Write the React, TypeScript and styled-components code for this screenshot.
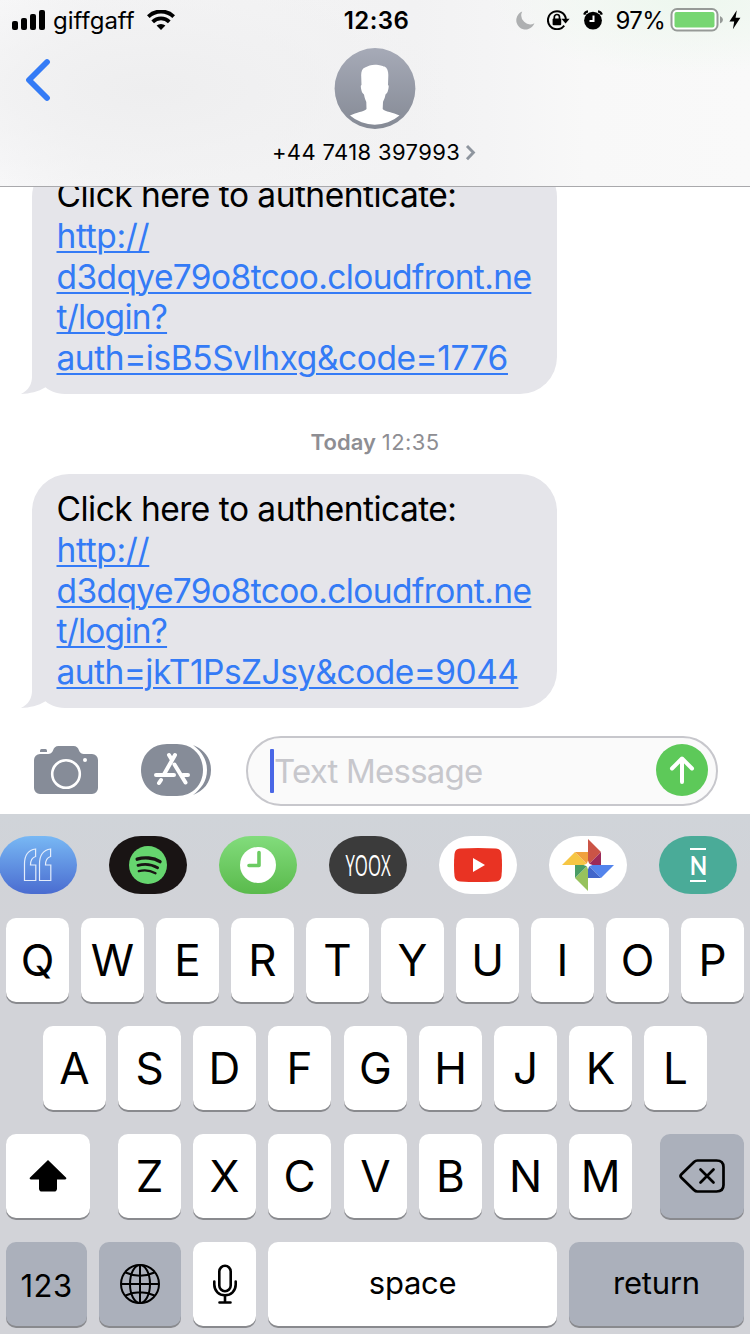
import React from "react";
import styled, { createGlobalStyle } from "styled-components";

const GlobalStyle = createGlobalStyle`
  * { box-sizing: border-box; }
  html, body { margin: 0; padding: 0; }
  body { background: #fff; font-family: Inter, "Liberation Sans", sans-serif; color: #000; }
  svg { display: block; flex: none; }
`;

const Screen = styled.div`
  width: 750px;
  height: 1334px;
  display: flex;
  flex-direction: column;
  overflow: hidden;
  background: #fff;
`;

const Header = styled.header`
  flex: none;
  height: 187px;
  border-bottom: 1px solid #a9a9ac;
  background:
    radial-gradient(ellipse 200px 75px at 690px 0px, #edf7ee 0%, rgba(240, 248, 241, 0) 100%),
    radial-gradient(ellipse 300px 120px at 150px 90px, #eeeeef 0%, rgba(240, 240, 241, 0.8) 45%, rgba(244, 244, 245, 0) 100%),
    linear-gradient(90deg, #f8f8f9 0%, #f4f4f5 12%, #f2f2f3 55%, #f4f4f5 65%, #f8f8f8 78%, #f9f9f9 100%);
`;

const StatusBar = styled.div`
  display: grid;
  grid-template-columns: 1fr auto 1fr;
  align-items: center;
  height: 40px;
  padding: 0 9px 0 12px;
`;

const StatusSide = styled.div<{ $end?: boolean }>`
  display: flex;
  align-items: center;
  justify-content: ${(p) => (p.$end ? "flex-end" : "flex-start")};
`;

const StatusIcon = styled.div<{ $mr: number }>`
  margin-right: ${(p) => p.$mr}px;
`;

const Label = styled.span<{
  $size: number;
  $weight?: number;
  $track?: number;
  $color?: string;
  $ml?: number;
  $mr?: number;
  $pt?: number;
}>`
  display: block;
  white-space: pre;
  font-size: ${(p) => p.$size}px;
  font-weight: ${(p) => p.$weight ?? 400};
  letter-spacing: ${(p) => p.$track ?? 0}px;
  color: ${(p) => p.$color ?? "#000"};
  margin-left: ${(p) => p.$ml ?? 0}px;
  margin-right: ${(p) => p.$mr ?? 0}px;
  padding-top: ${(p) => p.$pt ?? 0}px;
`;

const NavBar = styled.div`
  display: grid;
  grid-template-columns: 80px 1fr 80px;
  height: 146px;
`;

const BackButton = styled.div`
  padding: 18px 0 0 25px;
`;

const Contact = styled.div`
  display: flex;
  flex-direction: column;
  align-items: center;
  padding-top: 8px;
`;

const ContactLine = styled.div`
  display: flex;
  align-items: center;
  height: 28px;
  margin-top: 8px;
  gap: 5px;
`;

const Thread = styled.main`
  flex: none;
  height: 521px;
  padding-left: 32px;
  display: flex;
  flex-direction: column;
  justify-content: flex-end;
  align-items: flex-start;
  overflow: hidden;
`;

const Bubble = styled.div`
  position: relative;
  isolation: isolate;
  flex: none;
  width: 525px;
  height: 234px;
  padding: 15px 24px 15px 24.5px;
  border-radius: 37px;
  background: #e5e5ea;
`;

const Tail = styled.svg`
  position: absolute;
  z-index: -1;
  left: -11px;
  bottom: 0;
`;

const Line = styled.div<{ $track: number; $link?: boolean }>`
  height: 40.75px;
  line-height: 40.75px;
  font-size: 33.5px;
  white-space: pre;
  letter-spacing: ${(p) => p.$track}px;
  color: ${(p) => (p.$link ? "#347bf6" : "#000")};
  text-decoration: ${(p) => (p.$link ? "underline" : "none")};
  text-decoration-thickness: 2px;
  text-underline-offset: 3px;
`;

const Stamp = styled.div`
  flex: none;
  height: 80px;
  width: 686px;
  padding-top: 15px;
  display: flex;
  justify-content: center;
  align-items: center;
`;

const Composer = styled.div`
  flex: none;
  display: flex;
  align-items: flex-start;
  height: 106px;
  padding: 28px 32px 0 34px;
`;

const ComposerIcon = styled.div<{ $top: number; $width: number }>`
  flex: none;
  width: ${(p) => p.$width}px;
  padding-top: ${(p) => p.$top}px;
`;

const Field = styled.div`
  flex: none;
  display: flex;
  align-items: center;
  width: 472px;
  height: 70px;
  padding: 0 8px 0 22px;
  border: 2px solid #c7c7cc;
  border-radius: 35px;
  background: #fafafa;
`;

const Caret = styled.div`
  width: 4px;
  height: 44px;
  border-radius: 1px;
  background: #4a67e6;
`;

const SendButton = styled.div`
  margin-left: auto;
  padding-bottom: 2px;
`;

const Keyboard = styled.div`
  flex: none;
  height: 520px;
  padding-top: 21px;
  background: linear-gradient(180deg, #d0d4d9 0, #d1d3d8 60px, #d2d3d8 110px, #d2d3d8 100%);
`;

const AppStrip = styled.div`
  display: flex;
  gap: 32px;
  height: 83px;
  margin-left: -1px;
  padding-top: 1px;
`;

const AppPill = styled.div<{ $bg: string }>`
  flex: none;
  display: flex;
  align-items: center;
  justify-content: center;
  width: 78px;
  height: 58px;
  border-radius: 41% / 50%;
  background: ${(p) => p.$bg};
  overflow: hidden;
`;

const AppWord = styled.span`
  font-family: "Open Sans", sans-serif;
  font-size: 29px;
  font-weight: 500;
  line-height: 40px;
  color: #fff;
  transform: scaleX(0.58);
`;

const Rule = styled.div`
  width: 16px;
  height: 2.5px;
  background: #fff;
`;

const NStack = styled.div`
  display: flex;
  flex-direction: column;
  align-items: center;
`;

const NLetter = styled.span`
  font-family: Lato, sans-serif;
  font-size: 27px;
  font-weight: 700;
  line-height: 29.5px;
  color: #fff;
  transform: scaleX(0.84);
`;

const KeyRow = styled.div`
  display: flex;
  justify-content: center;
  height: 84px;
  margin-bottom: 24px;
`;

const KeyGroup = styled.div<{ $mr?: number; $ml?: number }>`
  display: flex;
  gap: 12px;
  margin-left: ${(p) => p.$ml ?? 0}px;
  margin-right: ${(p) => p.$mr ?? 0}px;
`;

const Key = styled.div<{ $w?: number; $dark?: boolean; $size?: number; $track?: number; $pt?: number; $pb?: number }>`
  flex: none;
  display: flex;
  align-items: center;
  justify-content: center;
  width: ${(p) => p.$w ?? 63}px;
  height: 84px;
  padding-top: ${(p) => p.$pt ?? 0}px;
  padding-bottom: ${(p) => p.$pb ?? 0}px;
  border-radius: 10px;
  background: ${(p) => (p.$dark ? "#abb0bb" : "#fff")};
  box-shadow: 0 2px 0 #898a8e;
  font-size: ${(p) => p.$size ?? 44}px;
  letter-spacing: ${(p) => p.$track ?? 0}px;
  line-height: 1;
`;

const Signal = () => (
  <svg width="34" height="20" viewBox="0 0 34 20">
    <rect x="0" y="11" width="6" height="9" rx="2" />
    <rect x="9" y="8" width="6" height="12" rx="2" />
    <rect x="18" y="4" width="6" height="16" rx="2" />
    <rect x="27" y="0" width="6" height="20" rx="2" />
  </svg>
);

const Wifi = () => (
  <svg width="28" height="20" viewBox="0 0 28 20" fill="none" stroke="#000">
    <path d="M1.3 6.6 A18.3 18.3 0 0 1 26.7 6.6" strokeWidth="3.9" />
    <path d="M5.7 11.9 A11.6 11.6 0 0 1 22.3 11.9" strokeWidth="3.7" />
    <path d="M14 20 L9.6 15.6 A6.6 6.6 0 0 1 18.4 15.6 Z" fill="#000" stroke="none" />
  </svg>
);

const Moon = () => (
  <svg width="19" height="19" viewBox="0 0 19 19">
    <path d="M6.2 0.6 A9.3 9.3 0 1 0 18.4 12.2 A8.9 8.9 0 0 1 6.2 0.6Z" fill="#aeb0b1" />
  </svg>
);

const RotationLock = () => (
  <svg width="24" height="20" viewBox="0 0 24 20">
    <path d="M17.2 15.6 A9 9 0 1 1 18.9 9" fill="none" stroke="#000" strokeWidth="2" />
    <path d="M14.4 8.8 H22.6 L18.6 13.6Z" />
    <rect x="5.6" y="8.4" width="8.6" height="6.8" rx="1" />
    <path d="M7.3 9 V7.1 A2.6 2.6 0 0 1 12.5 7.1 V9" fill="none" stroke="#000" strokeWidth="1.7" />
  </svg>
);

const Alarm = () => (
  <svg width="20" height="20" viewBox="0 0 20 20">
    <circle cx="10" cy="10.6" r="8.9" />
    <path d="M1.2 4.6 A4.5 4.5 0 0 1 5 1.4 M18.8 4.6 A4.5 4.5 0 0 0 15 1.4" fill="none" stroke="#000" strokeWidth="2.2" />
    <path d="M10.5 5.4 V11 H6.5" fill="none" stroke="#fff" strokeWidth="2" />
  </svg>
);

const Battery = () => (
  <svg width="54" height="24" viewBox="0 0 54 24">
    <rect x="1.5" y="1" width="46" height="21.5" rx="5.5" fill="#fff" stroke="#969a97" strokeWidth="2" />
    <rect x="4.5" y="4" width="40" height="15.5" rx="2" fill="#77d672" />
    <path d="M50 8 Q53 9.5 53 11.8 Q53 14 50 15.6Z" fill="#969a97" />
  </svg>
);

const Bolt = () => (
  <svg width="12" height="20" viewBox="0 0 12 20">
    <path d="M7.8 0.3 L0.4 11.4 H5.2 L3.9 19.2 L11.4 7.8 H6.6Z" />
  </svg>
);

const Back = () => (
  <svg width="27" height="44" viewBox="0 0 27 44">
    <path d="M22 4 L4 22 L22 40" fill="none" stroke="#347bf6" strokeWidth="5.8" strokeLinecap="round" strokeLinejoin="round" />
  </svg>
);

const Avatar = () => (
  <svg width="83" height="82" viewBox="0 0 83 82">
    <defs>
      <linearGradient id="avatarFill" x1="0" y1="0" x2="0" y2="1">
        <stop offset="0" stopColor="#a6aab7" />
        <stop offset="1" stopColor="#858a95" />
      </linearGradient>
    </defs>
    <circle cx="41" cy="40.5" r="40.4" fill="url(#avatarFill)" />
    <path
      d="M41 16.7 C46 16.7 48 18 50.5 18.6 C53.5 20 54.5 24 54.3 28 L54 37 C55.3 37.5 54.5 40.5 54 42.5 C53.5 45 52.5 45.5 51.5 46.5 C51 50.5 49.6 52 49 54 L48.7 61 C51 63.6 59 64.5 65.5 67.5 A38 38 0 0 1 16 67.5 C22.5 64.5 30 63.6 32.5 61 L32.3 54 C31.6 52 30.6 50.5 30 46.5 C29 45.5 28 45 27.5 42.5 C27 40.5 26.2 37.5 27.5 37 L27.2 28 C27 24 28 20.5 31 19.5 C34 18 37 16.7 41 16.7Z"
      fill="#fff"
    />
  </svg>
);

const SmallChevron = () => (
  <svg width="13" height="17" viewBox="0 0 13 17">
    <path d="M2 2 L8.4 8.6 L2 15.2" fill="none" stroke="#8e959e" strokeWidth="2.9" />
  </svg>
);

const BubbleTail = () => (
  <Tail width="60" height="40" viewBox="0 0 60 40">
    <path d="M11 0 V23 C11 30 7.5 36.5 0 40 H60 V0Z" fill="#e5e5ea" />
    <path d="M0 40 C9 39.4 17 37.8 24.5 33.2 C30 38 37 40 48 40 Z" fill="#fff" />
  </Tail>
);

const Camera = () => (
  <svg width="64" height="48" viewBox="0 0 64 48">
    <path
      d="M6 8 H13 C17 8 18 6.5 19 4.5 C20 1.5 21.5 0 24.5 0 H39.5 C42.5 0 44 1.5 45 4.5 C46 6.5 47 8 51 8 H58 A6 6 0 0 1 64 14 V42 A6 6 0 0 1 58 48 H6 A6 6 0 0 1 0 42 V14 A6 6 0 0 1 6 8Z"
      fill="#868c98"
    />
    <path d="M6 6 V4.5 Q6 3 7.5 3 H11.5 Q13 3 13 4.5 V6Z" fill="#868c98" />
    <circle cx="32" cy="28" r="13.8" fill="none" stroke="#fff" strokeWidth="2.6" />
    <circle cx="51" cy="14" r="2" fill="#fff" />
  </svg>
);

const AppStore = () => (
  <svg width="71" height="52" viewBox="0 0 71 52">
    <path d="M52 1 C62 5 70 13 70 26 C70 39 62 47 52 51 C60 45 66 37 66 26 C66 15 60 7 52 1Z" fill="#868c98" />
    <path d="M26 0 H36 C52 0 62 12 62 26 C62 40 52 52 36 52 H26 C10 52 0 40 0 26 C0 12 10 0 26 0Z" fill="#868c98" />
    <g fill="none" stroke="#fff" strokeWidth="4" strokeLinecap="round">
      <path d="M15 31 H33 M42 31 H47 M34 11 L23.5 29.5 M28 11 L31 16 M33.5 20.5 L44.5 38.5 M20 36 L18 39" />
    </g>
  </svg>
);

const Send = () => (
  <svg width="52" height="52" viewBox="0 0 52 52">
    <circle cx="26" cy="26" r="26" fill="#5dc959" />
    <path d="M26 38 V15 M16 24.5 L26 14.5 L36 24.5" fill="none" stroke="#fff" strokeWidth="4" strokeLinecap="round" strokeLinejoin="round" />
  </svg>
);

const Quote = () => (
  <svg width="30" height="34" viewBox="0 0 30 34" fill="none" stroke="#e4edfb" strokeWidth="1.2">
    <path d="M12.6 1 C5 2 1.5 8 1.5 16 V32.5 H12.8 V17 H7.5 C7.5 12 9 9.5 12.6 8.5Z" />
    <path d="M27.6 1 C20 2 16.5 8 16.5 16 V32.5 H27.8 V17 H22.5 C22.5 12 24 9.5 27.6 8.5Z" />
  </svg>
);

const Spotify = () => (
  <svg width="38" height="38" viewBox="0 0 38 38">
    <circle cx="19" cy="19" r="19" fill="#66d56f" />
    <g fill="none" stroke="#191414" strokeLinecap="round">
      <path d="M8.2 13.2 C15 11 24.5 11.5 31 15.6" strokeWidth="3.4" />
      <path d="M9 19.4 C15 17.7 22.5 18.2 28.6 21.8" strokeWidth="2.8" />
      <path d="M9.8 25.2 C15 23.8 21 24.2 26.5 27.3" strokeWidth="2.3" />
    </g>
  </svg>
);

const Clock = () => (
  <svg width="36" height="36" viewBox="0 0 36 36">
    <circle cx="18" cy="18" r="18" fill="#fff" />
    <path d="M19 5.5 V18.5 H9" fill="none" stroke="#6ccb62" strokeWidth="3.6" strokeLinecap="round" strokeLinejoin="round" />
  </svg>
);

const YouTube = () => (
  <svg width="48" height="34" viewBox="0 0 48 34">
    <path d="M6 0.6 Q24 -0.6 42 0.6 Q47 1 47.5 6 Q48.5 17 47.5 28 Q47 33 42 33.4 Q24 34.6 6 33.4 Q1 33 0.5 28 Q-0.5 17 0.5 6 Q1 1 6 0.6Z" fill="#e93323" />
    <path d="M19 10 L31 17 L19 24Z" fill="#fff" />
  </svg>
);

const Photos = () => (
  <svg width="52" height="52" viewBox="0 0 52 52">
    <path d="M26 0 L39 13 L26 26Z" fill="#cb5446" />
    <path d="M39 13 V26 H26Z" fill="#9c2a58" />
    <path d="M52 26 L39 39 L26 26Z" fill="#5384ec" />
    <path d="M39 39 H26 V26Z" fill="#4166cb" />
    <path d="M26 52 L13 39 L26 26Z" fill="#97c25d" />
    <path d="M13 39 V26 H26Z" fill="#4a9d65" />
    <path d="M0 26 L13 13 L26 26Z" fill="#f6c644" />
    <path d="M13 13 H26 V26Z" fill="#f0a13e" />
    <path d="M26 21.5 L27.2 24.8 L30.5 26 L27.2 27.2 L26 30.5 L24.8 27.2 L21.5 26 L24.8 24.8Z" fill="#fff" />
  </svg>
);

const Shift = () => (
  <svg width="38" height="34" viewBox="0 0 38 34">
    <path d="M19 1 L37.2 18.8 Q38 20.6 36 20.6 H28 V29.5 Q28 32.6 25 32.6 H13 Q10 32.6 10 29.5 V20.6 H2 Q0 20.6 0.8 18.8Z" />
  </svg>
);

const Delete = () => (
  <svg width="46" height="34" viewBox="0 0 46 34" fill="none" stroke="#000" strokeLinecap="round" strokeLinejoin="round">
    <path d="M18.5 1.5 H37.5 Q44.5 1.5 44.5 8 V26 Q44.5 32.5 37.5 32.5 H18.5 Q16.5 32.5 15 31 L2.2 18.5 Q0.7 17 2.2 15.5 L15 3 Q16.5 1.5 18.5 1.5Z" strokeWidth="2.7" />
    <path d="M21.5 10.5 L34.5 23.5 M34.5 10.5 L21.5 23.5" strokeWidth="2.7" />
  </svg>
);

const Globe = () => (
  <svg width="40" height="40" viewBox="0 0 40 40" fill="none" stroke="#000" strokeWidth="2">
    <circle cx="20" cy="20" r="19" />
    <ellipse cx="20" cy="20" rx="10" ry="19" />
    <path d="M20 1 V39 M1 20 H39 M5.5 8.5 Q20 15 34.5 8.5 M5.5 31.5 Q20 25 34.5 31.5" />
  </svg>
);

const Mic = () => (
  <svg width="24" height="40" viewBox="0 0 24 40" fill="none" stroke="#000" strokeWidth="2.6" strokeLinecap="round">
    <rect x="6.3" y="1.8" width="11.4" height="25.4" rx="5.7" />
    <path d="M1.3 17.5 V20.5 C1.3 27 6 31.3 12 31.3 C18 31.3 22.7 27 22.7 20.5 V17.5" />
    <path d="M12 31.5 V38 M6.5 38.5 H17.5" />
  </svg>
);

const keys = (s: string) => s.split("").map((c) => <Key key={c}>{c}</Key>);

interface MessageLine {
  text: string;
  track: number;
}

const Message = ({ lines }: { lines: MessageLine[] }) => (
  <Bubble>
    <BubbleTail />
    {lines.map((l, i) => (
      <Line key={l.text} $track={l.track} $link={i > 0}>
        {l.text}
      </Line>
    ))}
  </Bubble>
);

const intro: MessageLine[] = [
  { text: "Click here to authenticate:", track: -0.52 },
  { text: "http://", track: -0.35 },
  { text: "d3dqye79o8tcoo.cloudfront.ne", track: -0.6 },
  { text: "t/login?", track: -0.78 },
];

export default function App() {
  return (
    <Screen>
      <GlobalStyle />
      <Header>
        <StatusBar>
          <StatusSide>
            <Signal />
            <Label $size={24} $ml={7} $mr={12} $pt={1}>giffgaff</Label>
            <Wifi />
          </StatusSide>
          <Label $size={24} $weight={600} $track={0.4} $pt={1}>12:36</Label>
          <StatusSide $end>
            <StatusIcon $mr={12}><Moon /></StatusIcon>
            <StatusIcon $mr={12}><RotationLock /></StatusIcon>
            <StatusIcon $mr={13}><Alarm /></StatusIcon>
            <Label $size={24} $track={-0.7} $mr={5} $pt={1}>97%</Label>
            <StatusIcon $mr={5}><Battery /></StatusIcon>
            <Bolt />
          </StatusSide>
        </StatusBar>
        <NavBar>
          <BackButton>
            <Back />
          </BackButton>
          <Contact>
            <Avatar />
            <ContactLine>
              <Label $size={22} $track={0.36}>+44 7418 397993</Label>
              <SmallChevron />
            </ContactLine>
          </Contact>
        </NavBar>
      </Header>
      <Thread>
        <Message lines={[...intro, { text: "auth=isB5SvIhxg&code=1776", track: -0.44 }]} />
        <Stamp>
          <Label $size={22} $weight={600} $track={0.1} $color="#8e8e93">Today </Label>
          <Label $size={22} $track={0.4} $color="#8e8e93">12:35</Label>
        </Stamp>
        <Message lines={[...intro, { text: "auth=jkT1PsZJsy&code=9044", track: -0.54 }]} />
      </Thread>
      <Composer>
        <ComposerIcon $top={10} $width={107}>
          <Camera />
        </ComposerIcon>
        <ComposerIcon $top={8} $width={105}>
          <AppStore />
        </ComposerIcon>
        <Field>
          <Caret />
          <Label $size={33} $track={-0.78} $color="#c7c7cc">Text Message</Label>
          <SendButton>
            <Send />
          </SendButton>
        </Field>
      </Composer>
      <Keyboard>
        <AppStrip>
          <AppPill $bg="linear-gradient(180deg, #78b8f4, #4a6cd0)"><Quote /></AppPill>
          <AppPill $bg="#191414"><Spotify /></AppPill>
          <AppPill $bg="linear-gradient(180deg, #82dc7c, #5aba4c)"><Clock /></AppPill>
          <AppPill $bg="#3b3b3b"><AppWord>YOOX</AppWord></AppPill>
          <AppPill $bg="#fff"><YouTube /></AppPill>
          <AppPill $bg="#fff"><Photos /></AppPill>
          <AppPill $bg="#4aab98">
            <NStack>
              <Rule />
              <NLetter>N</NLetter>
              <Rule />
            </NStack>
          </AppPill>
        </AppStrip>
        <KeyRow>
          <KeyGroup>{keys("QWERTYUIOP")}</KeyGroup>
        </KeyRow>
        <KeyRow>
          <KeyGroup $mr={13}>{keys("ASDF")}</KeyGroup>
          <KeyGroup>{keys("GHJKL")}</KeyGroup>
        </KeyRow>
        <KeyRow>
          <Key $w={84}><Shift /></Key>
          <KeyGroup $ml={28} $mr={13}>{keys("ZXC")}</KeyGroup>
          <KeyGroup $mr={28}>{keys("VBNM")}</KeyGroup>
          <Key $w={84} $dark><Delete /></Key>
        </KeyRow>
        <KeyRow>
          <KeyGroup>
            <Key $w={81} $dark $size={31} $track={0.4} $pt={2}>123</Key>
            <Key $w={82} $dark><Globe /></Key>
            <Key><Mic /></Key>
            <Key $w={289} $size={31} $track={-0.3} $pb={3}>space</Key>
            <Key $w={175} $dark $size={31} $track={-0.2} $pb={3}>return</Key>
          </KeyGroup>
        </KeyRow>
      </Keyboard>
    </Screen>
  );
}
